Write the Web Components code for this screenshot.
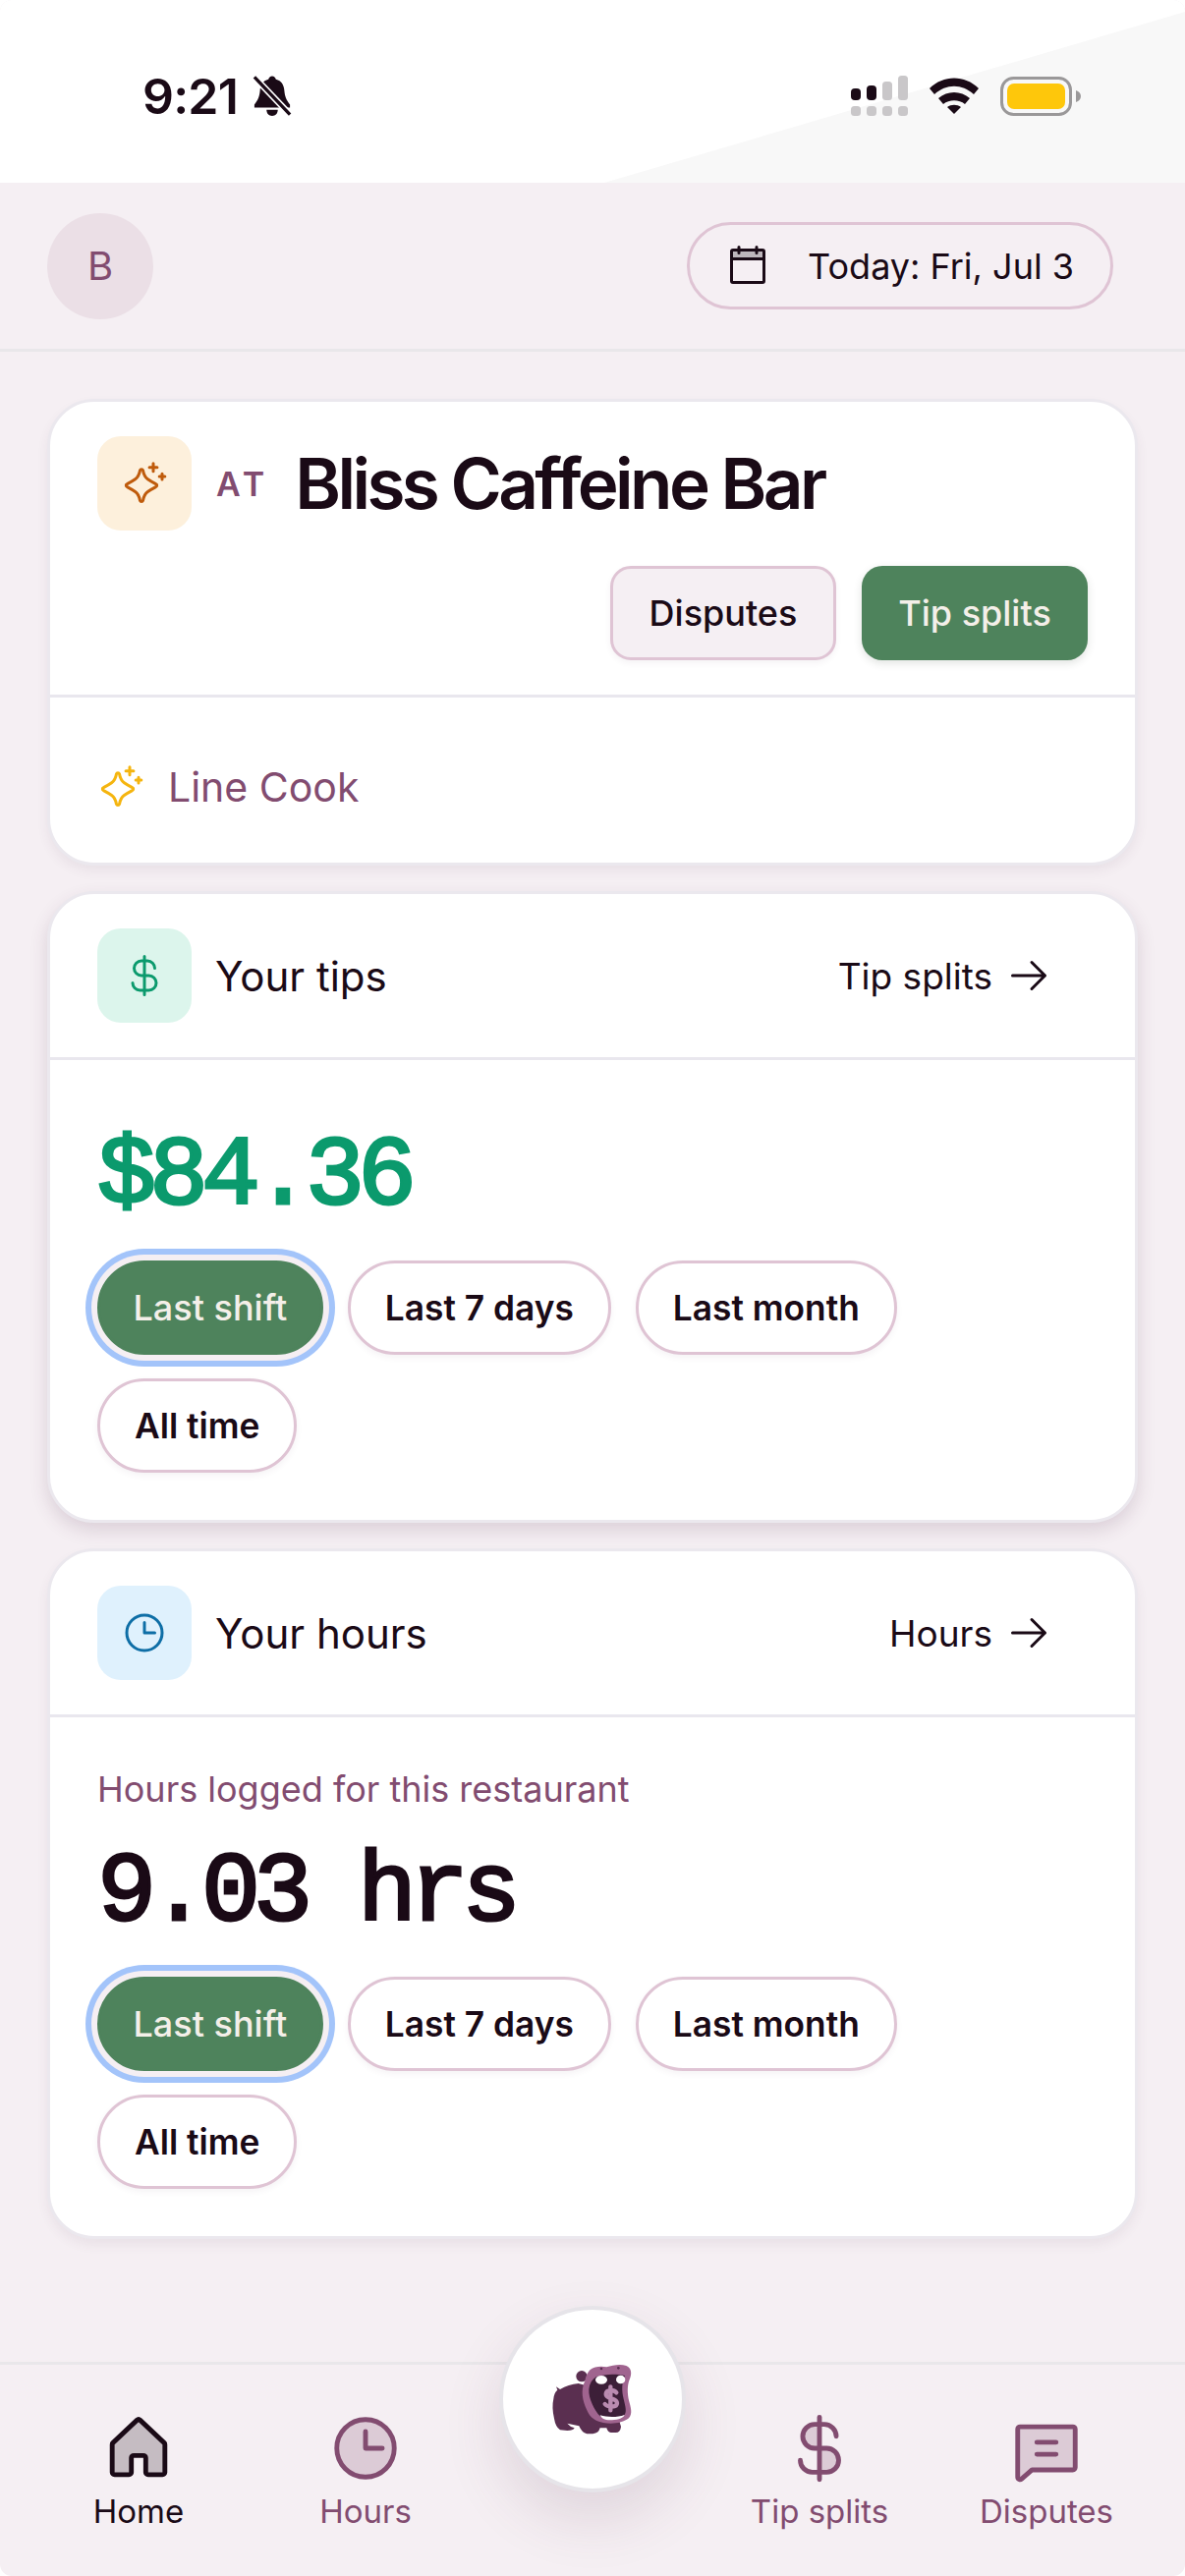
<!DOCTYPE html>
<html lang="en">
<head>
<meta charset="utf-8">
<title>Home</title>
<style>
  html, body { margin: 0; height: 100%; background: #fff; }
  body { font-family: Inter, "Noto Sans", sans-serif; color: #1a0a16; }
  #app { display: flex; flex-direction: column; height: 2622px; overflow: hidden; background: #f5eff3; border-radius: 12px; }
</style>
</head>
<body>
<div id="app">
  <status-bar></status-bar>
  <app-header></app-header>
  <main-stack>
    <info-card tint="#fdf0dc">
      <ph-icon slot="icon" name="sparkle" color="#bf5b0c"></ph-icon>
      <venue-title slot="title">Bliss Caffeine Bar</venue-title>
      <venue-actions slot="extra"></venue-actions>
      <role-line>Line Cook</role-line>
    </info-card>
    <info-card tint="#dcf5ec" raised>
      <ph-icon slot="icon" name="dollar-line" color="#0b9a6d"></ph-icon>
      <card-heading slot="title">Your tips</card-heading>
      <card-link slot="action">Tip splits</card-link>
      <big-figure color="#0b9a6d">$84.36</big-figure>
      <range-pills></range-pills>
    </info-card>
    <info-card tint="#dff1fd">
      <ph-icon slot="icon" name="clock-line" color="#0e6ea6"></ph-icon>
      <card-heading slot="title">Your hours</card-heading>
      <card-link slot="action">Hours</card-link>
      <small-note>Hours logged for this restaurant</small-note>
      <big-figure>9.03 hrs</big-figure>
      <range-pills></range-pills>
    </info-card>
  </main-stack>
  <bottom-nav></bottom-nav>
</div>

<script>
// icons are 256 unit grid, stroke 16, duotone parts get .2 opacity
const ICONS = {
  calendar: `<rect x="40" y="40" width="176" height="48" fill="currentColor" opacity=".25" stroke="none"/>
    <rect x="40" y="40" width="176" height="176" rx="8"/><path d="M176 24v32M80 24v32M40 88h176"/>`,
  arrow: `<path d="M40 128h176M144 56l72 72-72 72"/>`,
  sparkle: `<path transform="translate(0 -5)" d="M104 62a8.500 8.500 0 0 1 16 0Q126 96 146 110 160 120 190 136a8.500 8.500 0 0 1 0 16Q160 168 146 178 126 192 120 226a8.500 8.500 0 0 1-16 0Q98 192 78 178 64 168 34 152a8.500 8.500 0 0 1 0-16Q64 120 78 110 98 96 104 62Z"/>
    <path d="M176 20v42M155 41h42M224 76v30M209 91h30"/>`,
  "dollar-line": `<path d="M128 24v208M184 88a40 40 0 0 0-40-40h-32a40 40 0 0 0 0 80h40a40 40 0 0 1 0 80h-48a40 40 0 0 1-40-40"/>`,
  "clock-line": `<circle cx="128" cy="128" r="96"/><path d="M128 72v56h56"/>`,
  home: `<path fill="currentColor" fill-opacity=".22" d="M152 208v-48a8 8 0 0 0-8-8h-32a8 8 0 0 0-8 8v48a8 8 0 0 1-8 8H48a8 8 0 0 1-8-8v-92.500a8 8 0 0 1 2.600-5.900l80-75.500a8 8 0 0 1 10.800 0l80 75.500a8 8 0 0 1 2.600 5.900V208a8 8 0 0 1-8 8h-48a8 8 0 0 1-8-8Z"/>`,
  clock: `<circle cx="128" cy="128" r="96" fill="currentColor" fill-opacity=".22"/><path d="M128 72v56h56"/>`,
  dollar: `<path fill="currentColor" fill-opacity=".22" stroke="none" d="M112 48a40 40 0 0 0 0 80h16V48ZM152 128h-24v80h24a40 40 0 0 0 0-80Z"/>
    <path d="M128 24v208M184 88a40 40 0 0 0-40-40h-32a40 40 0 0 0 0 80h40a40 40 0 0 1 0 80h-48a40 40 0 0 1-40-40"/>`,
  chat: `<path fill="currentColor" fill-opacity=".22" d="M45.200 230.100A8 8 0 0 1 32 224V64a8 8 0 0 1 8-8h176a8 8 0 0 1 8 8v128a8 8 0 0 1-8 8H80Z"/><path d="M96 108h64M96 148h64"/>`,
};

class PhIcon extends HTMLElement {
  connectedCallback() {
    const size = this.getAttribute("size") || 48;
    const color = this.getAttribute("color") || "currentColor";
    const root = this.shadowRoot ?? this.attachShadow({ mode: "open" });
    root.innerHTML = `<style>:host{display:block;width:${size}px;height:${size}px;color:${color};flex:none}
      svg{display:block;width:100%;height:100%}</style>
      <svg viewBox="0 0 256 256" fill="none" stroke="currentColor" stroke-width="16" stroke-linecap="round" stroke-linejoin="round">${ICONS[this.getAttribute("name")]}</svg>`;
  }
}
customElements.define("ph-icon", PhIcon);

// little helper, most elements here are just a style block + markup
function define(tag, css, html) {
  customElements.define(tag, class extends HTMLElement {
    constructor() {
      super();
      this.attachShadow({ mode: "open" }).innerHTML = `<style>${css}</style>${html}`;
    }
  });
}

define("status-bar", `
  :host{display:block;position:relative;height:186px;background:#fff;flex:none;overflow:hidden}
  .wedge{position:absolute;inset:0;width:100%;height:100%}
  .row{position:relative;display:flex;justify-content:space-between;align-items:center;height:100%;box-sizing:border-box;padding:9px 106px 0 145px}
  .left{display:flex;align-items:center;gap:15px}
  .time{font:600 50px/1 Inter,sans-serif;letter-spacing:-.8px;color:#1a0a16}
  .right{display:flex;align-items:center;gap:22px}
  svg{display:block}
`, `
  <svg class="wedge" viewBox="0 0 1206 186" preserveAspectRatio="none"><polygon points="615,186 1206,12 1206,186" fill="#f8f8f8"/></svg>
  <div class="row">
    <div class="left">
      <span class="time">9:21</span>
      <svg width="40" height="43" viewBox="0 0 42 44"><path d="M21 1c2 0 3.500 1.500 4 3.500 6 1.500 8.500 6 9 12 .5 6 2 10 6 15v3H2v-3c4-5 5.500-9 6-15 .5-6 3-10.500 9-12C17.500 2.500 19 1 21 1ZM15 37h12c0 4-2.500 6.500-6 6.500S15 41 15 37Z" fill="#1a0a16"/><path d="M2 2l38 40" stroke="#fff" stroke-width="7"/><path d="M2 2l38 40" stroke="#1a0a16" stroke-width="3.500"/></svg>
    </div>
    <div class="right">
      <svg width="58" height="41" viewBox="0 0 58 41">
        <g fill="#c9c7c9"><rect x="0" y="31" width="10" height="10" rx="3.500"/><rect x="16" y="31" width="10" height="10" rx="3.500"/><rect x="32" y="31" width="10" height="10" rx="3.500"/><rect x="48" y="31" width="10" height="10" rx="3.500"/><rect x="32" y="6" width="10" height="19" rx="3.500"/><rect x="48" y="0" width="10" height="25" rx="3.500"/></g>
        <rect x="0" y="13" width="10" height="12" rx="4" fill="#1a0a16"/><rect x="16" y="10" width="10" height="15" rx="4" fill="#1a0a16"/>
      </svg>
      <svg width="50" height="37" viewBox="0 0 50 37"><g fill="#1a0a16"><path d="M0 11C14-3 36-3 50 11l-5 6C33 6 17 6 5 17Z"/><path d="M9 21c9-8 23-8 32 0l-5 6c-6-5-16-5-22 0Z"/><path d="M18 30c4-3 10-3 14 0l-7 7Z"/></g></svg>
      <svg width="82" height="40" viewBox="0 0 82 40">
        <rect x="1.500" y="1.500" width="70" height="37" rx="12" fill="none" stroke="#9a9899" stroke-width="3"/>
        <rect x="7" y="7" width="59" height="26" rx="7" fill="#fec70b"/>
        <path d="M77 14c3 1 5 3 5 6s-2 5-5 6Z" fill="#9a9899"/>
      </svg>
    </div>
  </div>
`);

define("app-header", `
  :host{display:flex;align-items:center;justify-content:space-between;flex:none;height:169px;padding:0 73px 0 48px;border-bottom:3px solid #e9e7ea}
  .avatar{width:108px;height:108px;border-radius:50%;background:#ebdfe6;color:#824c70;display:flex;align-items:center;justify-content:center;font-size:40px}
  .date{display:flex;align-items:center;gap:37px;height:89px;box-sizing:border-box;padding:0 37px 0 35px;border:3px solid #dfc4d4;border-radius:45px;font-size:36px;color:#1a0a16}
`, `
  <div class="avatar">B</div>
  <div class="date"><ph-icon name="calendar" size="48" color="#1a0a16"></ph-icon><span>Today: Fri, Jul 3</span></div>
`);

define("main-stack", `
  :host{display:flex;flex-direction:column;gap:26px;flex:1;min-height:0;padding:48px 48px 0}
`, `<slot></slot>`);

class InfoCard extends HTMLElement {
  constructor() {
    super();
    this.attachShadow({ mode: "open" }).innerHTML = `<style>
      :host{display:block;background:#fff;border:3px solid #ebe8ee;border-radius:48px;box-shadow:0 6px 12px rgba(90,50,80,.07);overflow:hidden}
      :host([raised]){box-shadow:0 8px 18px rgba(90,50,80,.16)}
      .head{padding:35px 48px;border-bottom:3px solid #e9e7ee}
      .line{display:flex;align-items:center;gap:24px}
      .tile{width:96px;height:96px;border-radius:24px;display:flex;align-items:center;justify-content:center;flex:none;background:${this.getAttribute("tint")}}
      ::slotted([slot=title]){flex:1}
      .body{padding:48px}
    </style>
    <div class="head">
      <div class="line"><div class="tile"><slot name="icon"></slot></div><slot name="title"></slot><slot name="action"></slot></div>
      <slot name="extra"></slot>
    </div>
    <div class="body"><slot></slot></div>`;
  }
}
customElements.define("info-card", InfoCard);

define("venue-title", `
  :host{display:flex;align-items:center;gap:26px;min-width:0}
  .at{font-size:34px;font-weight:600;letter-spacing:5px;color:#824c70;margin-left:1px}
  .name{font-size:71px;font-weight:600;letter-spacing:-3.600px;color:#1a0a16;white-space:nowrap;line-height:1}
`, `<span class="at">AT</span><span class="name"><slot></slot></span>`);

define("venue-actions", `
  :host{display:flex;justify-content:flex-end;gap:26px;margin-top:36px}
  .btn{display:flex;align-items:center;justify-content:center;height:96px;width:230px;box-sizing:border-box;border-radius:21px;font-size:36px;font-weight:500}
  .ghost{background:#f5eff3;border:3px solid #dfc4d4;color:#1a0a16;box-shadow:0 3px 6px rgba(90,50,80,.06)}
  .solid{background:#4e835c;color:#f4efe9;box-shadow:0 3px 8px rgba(40,60,40,.14)}
`, `<div class="btn ghost">Disputes</div><div class="btn solid">Tip splits</div>`);

define("role-line", `
  :host{display:flex;align-items:center;gap:24px;height:72px;box-sizing:border-box;padding-top:14px;font-size:41px;color:#824c70}
`, `<ph-icon name="sparkle" size="48" color="#f5b50f"></ph-icon><span><slot></slot></span>`);

define("card-heading", `
  :host{display:block;font-size:42px;font-weight:400;color:#1a0a16}
`, `<slot></slot>`);

define("card-link", `
  :host{display:flex;align-items:center;gap:13px;padding-right:36px;font-size:37px;font-weight:400;color:#1a0a16}
`, `<span><slot></slot></span><ph-icon name="arrow" size="48" color="#1a0a16"></ph-icon>`);

define("small-note", `
  :host{display:block;font-size:36px;line-height:54px;color:#824c70;margin:-2px 0 8px}
`, `<slot></slot>`);

class BigFigure extends HTMLElement {
  constructor() {
    super();
    const c = this.getAttribute("color") || "#1a0a16";
    // regular weight + thin stroke gets closer to the semibold mono in the app than the real bold
    this.attachShadow({ mode: "open" }).innerHTML = `<style>:host{display:block;font:400 100px/124px "Liberation Mono","DejaVu Sans Mono",monospace;letter-spacing:-7px;-webkit-text-stroke:3px ${c};color:${c};padding-top:10px;margin-bottom:22px}</style><slot></slot>`;
  }
}
customElements.define("big-figure", BigFigure);

define("range-pills", `
  :host{display:flex;flex-wrap:wrap;gap:24px 25px}
  .pill{display:flex;align-items:center;height:96px;box-sizing:border-box;padding:0 35px;border-radius:48px;background:#fff;border:3px solid #dfc4d4;font-size:35.300px;font-weight:600;color:#1a0a16;box-shadow:0 3px 6px rgba(90,50,80,.06)}
  .pill.on{background:#4e835c;border-color:#4e835c;color:#f4efe9;font-size:36px;font-weight:500;padding:0 33.500px;box-shadow:0 0 0 6px #f5eff3,0 0 0 12px #a3c4fa}
`, `<div class="pill on">Last shift</div><div class="pill">Last 7 days</div><div class="pill">Last month</div><div class="pill">All time</div>`);

define("nav-item", `
  :host{display:flex;flex-direction:column;align-items:center;gap:2px;color:#824c70;font-size:33px;font-weight:400}
  :host([current]){color:#1a0a16}
  span{line-height:46px}
`, `<slot name="icon"></slot><span><slot></slot></span>`);

define("hippo-fab", `
  :host{position:absolute;left:508px;top:-60px;width:190px;height:190px;box-sizing:border-box;border-radius:50%;background:#fff;border:4px solid #e6e4e9;box-shadow:0 26px 60px rgba(90,50,80,.14);display:flex;align-items:center;justify-content:center}
  svg{display:block;width:220px;height:220px;flex:none}
`, `
  <svg viewBox="9 6 660 660">
    <circle cx="306" cy="266" r="17" fill="#5a2f50"/>
    <path fill="#5a2f50" d="M228 298 240 306C256 296 276 290 296 288L340 300 420 400 426 420Q424 438 410 438L395 438Q385 436 382 424L362 424Q358 440 340 442L322 442Q306 438 298 418L262 410Q270 420 284 424 280 432 262 432L240 430Q226 420 222 395 214 360 220 335 222 315 232 308Z"/>
    <path fill="#a0648f" d="M332 246C345 236 365 234 382 238 400 232 425 228 442 234 458 240 460 258 452 276 444 296 446 320 450 340 456 362 462 380 450 394 432 408 400 414 372 408 350 404 332 394 322 370 308 340 302 310 316 280 318 266 324 254 332 246Z"/>
    <path fill="#3c1f38" d="M350 268C378 258 412 258 438 264 428 285 428 310 434 335 440 360 444 375 436 385 412 396 385 396 362 388 346 370 326 335 328 305 330 288 338 276 350 268Z"/>
    <ellipse cx="366" cy="277" rx="18" ry="13" fill="#fff"/>
    <ellipse cx="425" cy="276" rx="14" ry="13" fill="#fff"/>
    <path fill="#fff" d="M362 385C385 392 415 392 437 384 432 396 410 400 392 400 376 400 366 394 362 385Z"/>
    <circle cx="366" cy="243" r="4" fill="#5a2f50"/><circle cx="418" cy="241" r="4" fill="#5a2f50"/>
    <path fill="none" stroke="#b98bb0" stroke-width="13" stroke-linecap="round" d="M412 316c-8-10-32-10-32 5 0 16 34 10 34 27 0 14-28 14-37 3M394 298v72"/>
  </svg>
`);

define("bottom-nav", `
  :host{position:relative;display:grid;grid-template-columns:repeat(5,231px);justify-content:center;flex:none;height:215px;border-top:3px solid #e9e7ea}
  .cell{padding-top:46px;display:flex;justify-content:center}
`, `
  <div class="cell"><nav-item current><ph-icon slot="icon" name="home" size="78"></ph-icon>Home</nav-item></div>
  <div class="cell"><nav-item><ph-icon slot="icon" name="clock" size="78"></ph-icon>Hours</nav-item></div>
  <div class="cell"></div>
  <div class="cell"><nav-item><ph-icon slot="icon" name="dollar" size="78"></ph-icon>Tip splits</nav-item></div>
  <div class="cell"><nav-item><ph-icon slot="icon" name="chat" size="78"></ph-icon>Disputes</nav-item></div>
  <hippo-fab></hippo-fab>
`);
</script>
</body>
</html>
